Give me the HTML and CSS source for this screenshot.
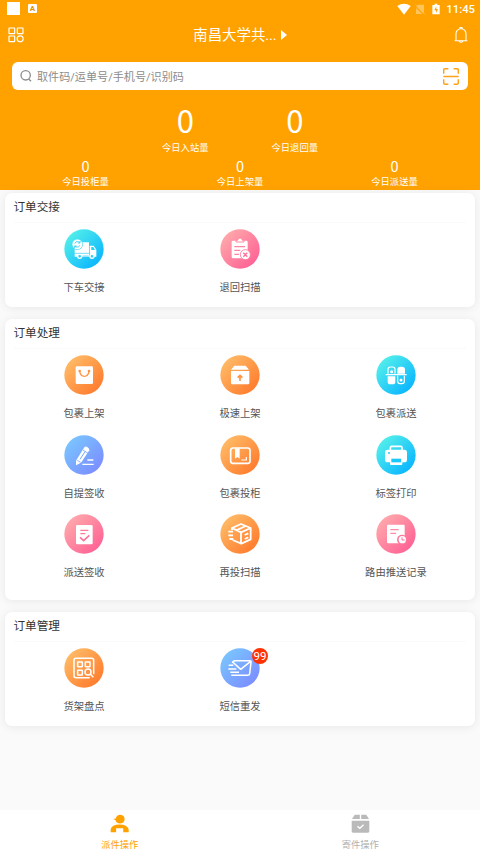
FILE: index.html
```html
<!DOCTYPE html>
<html lang="zh-CN">
<head>
<meta charset="utf-8">
<title>派件操作</title>
<link rel="stylesheet" href="styles.css">
</head>
<body>
<svg class="defs" width="0" height="0">
  <defs>
    <linearGradient id="cyan" x1="0" y1="0" x2="1" y2="1"><stop offset=".1" stop-color="#55f0ea"/><stop offset=".9" stop-color="#08b4ff"/></linearGradient>
    <linearGradient id="pink" x1="0" y1="0" x2="1" y2="1"><stop offset=".1" stop-color="#ffaaac"/><stop offset=".9" stop-color="#ff6094"/></linearGradient>
    <linearGradient id="orange" x1="0" y1="0" x2="1" y2="1"><stop offset=".1" stop-color="#ffbc68"/><stop offset=".9" stop-color="#ff7a2c"/></linearGradient>
    <linearGradient id="blue" x1="0" y1="0" x2="1" y2="1"><stop offset=".1" stop-color="#7ac6ff"/><stop offset=".9" stop-color="#7b8cff"/></linearGradient>
  </defs>
</svg>
<div class="app">
  <header class="header">
    <div class="status">
      <span class="square"></span>
      <span class="ime">A</span>
      <svg class="status-icons" viewBox="0 0 132 36"><path d="M1 9Q21-5 41 9L21 35Z" fill="#fff"/><path d="M63 5h18v27L58 11ZM57 15v18h19Z" fill="#ffc45c"/><path d="M56 4l28 30" stroke="#ffc45c" stroke-width="2"/><path d="M113 2h8v4h7v28h-22V6h7Z" fill="#fff"/><path d="M118 10l-6 12h5v8l6-12h-5Z" fill="#ffa200"/></svg>
      <span class="time">11:45</span>
    </div>
    <div class="titlebar">
      <svg class="apps" viewBox="0 0 48 48" fill="none" stroke="#fff" stroke-width="3.500"><rect x="3" y="3" width="17" height="17" rx="1"/><rect x="28" y="3" width="17" height="17" rx="1"/><rect x="3" y="27" width="17" height="17" rx="1"/><circle cx="36.500" cy="35.500" r="9"/></svg>
      <h1 class="station">南昌大学共...<span class="caret"></span></h1>
      <svg class="bell" viewBox="0 0 42 48" fill="none" stroke="#fff" stroke-width="3.200"><path d="M2 41h38M6 41V20a15 15 0 0 1 30 0v21M17 5q0-4 4-4t4 4M15 42q6 8 12 0"/></svg>
    </div>
    <div class="search">
      <svg class="glass" viewBox="0 0 36 36" fill="none" stroke="#8c8c8c" stroke-width="4"><circle cx="17" cy="16" r="14"/><path d="M26 27l7 7"/></svg>
      <span class="hint">取件码/运单号/手机号/识别码</span>
      <svg class="scan" viewBox="0 0 48 50" fill="none" stroke="#ffa21a" stroke-width="4.500"><path d="M2 17V6q0-4 4-4h10M32 2h10q4 0 4 4v11M2 33v11q0 4 4 4h10M32 48h10q4 0 4-4V33M1 25h46"/></svg>
    </div>
    <div class="totals">
      <div class="total"><b>0</b><span>今日入站量</span></div>
      <div class="total"><b>0</b><span>今日退回量</span></div>
    </div>
    <div class="counts">
      <div class="count"><b>0</b><span>今日投柜量</span></div>
      <div class="count"><b>0</b><span>今日上架量</span></div>
      <div class="count"><b>0</b><span>今日派送量</span></div>
    </div>
  </header>

  <main class="content">
    <section class="card">
      <h2>订单交接</h2>
      <div class="grid">
        <div class="item">
          <svg class="icon" viewBox="0 0 120 120"><circle cx="60" cy="60" r="59" fill="url(#cyan)"/><path d="M32 40h43v43H32ZM77 50h12l8 12v21H77Z" fill="#fff"/><path d="M82 54h6l5 9h-11Z" fill="#25d0f5"/><circle cx="40" cy="46" r="16" fill="#fff" stroke="#3cdcef" stroke-width="2"/><path d="M32 44q3-8 11-6l5 3M48 49q-4 7-11 5l-5-3M48 36v6h-6M32 57v-6h6" fill="none" stroke="#25d0f5" stroke-width="2.500"/><g fill="#2ed0f3" stroke="#fff" stroke-width="4"><circle cx="47" cy="82" r="6"/><circle cx="84" cy="82" r="6"/></g><path d="M31 73h44M56 81h18" stroke="#2dcff4" stroke-width="2"/></svg>
          <span>下车交接</span>
        </div>
        <div class="item">
          <svg class="icon" viewBox="0 0 120 120"><circle cx="60" cy="60" r="59" fill="url(#pink)"/><rect x="35" y="35" width="48" height="53" rx="4" fill="#fff"/><path d="M48 39v-5h5q1-7 7-7t7 7h5v5Z" fill="#fff" stroke="#ff8ca2" stroke-width="3"/><path d="M43 53h32M43 64h18M43 76h14" stroke="#ff86a0" stroke-width="4"/><circle cx="76" cy="77" r="15" fill="#fff" stroke="#ff75a0" stroke-width="2.500"/><path d="M70 71l12 12m0-12L70 83" stroke="#ff6f9a" stroke-width="4"/></svg>
          <span>退回扫描</span>
        </div>
      </div>
    </section>

    <section class="card tall">
      <h2>订单处理</h2>
      <div class="grid">
        <div class="item">
          <svg class="icon" viewBox="0 0 120 120"><circle cx="60" cy="60" r="59" fill="url(#orange)"/><rect x="35" y="34" width="52" height="53" rx="4" fill="#fff"/><path d="M47 50q3 14 14 14t14-14" fill="none" stroke="#ff9544" stroke-width="4"/><g fill="#ff9544"><circle cx="47" cy="48" r="4"/><circle cx="75" cy="48" r="4"/></g></svg>
          <span>包裹上架</span>
        </div>
        <div class="item">
          <svg class="icon" viewBox="0 0 120 120"><circle cx="60" cy="60" r="59" fill="url(#orange)"/><path d="M43 32h34l10 12H33ZM33 48h55v36q0 4-4 4H37q-4 0-4-4Z" fill="#fff"/><path d="M60 78V62m-7 6l7-7 7 7" fill="none" stroke="#ff9544" stroke-width="5"/></svg>
          <span>极速上架</span>
        </div>
        <div class="item">
          <svg class="icon" viewBox="0 0 120 120"><circle cx="60" cy="60" r="59" fill="url(#cyan)"/><g fill="none" stroke="#fff" stroke-width="3.500"><path d="M36 56V43q0-7 7-7h7q7 0 7 7v13M65 62v17q0 7 7 7h5q8 0 8-7V62M29 59h63"/></g><path d="M64 56V44q0-9 9-9h5q9 0 9 9v12ZM35 64h23v16q0 8-8 8h-7q-8 0-8-8Z" fill="#fff"/><circle cx="47" cy="50" r="4.500" fill="#fff"/><circle cx="75" cy="75" r="4.500" fill="#fff"/></svg>
          <span>包裹派送</span>
        </div>
        <div class="item">
          <svg class="icon" viewBox="0 0 120 120"><circle cx="60" cy="60" r="59" fill="url(#blue)"/><path d="M36 77L60 38q4-6 10-2t6 10L51 83l-15 8Z" fill="#fff"/><path d="M57 45l15 10M40 76l10 6" stroke="#78a6ff" stroke-width="2.500"/><path d="M48 73l15-23" stroke="#78a6ff" stroke-width="3"/><path d="M70 75h18M55 88h34" stroke="#fff" stroke-width="4"/></svg>
          <span>自提签收</span>
        </div>
        <div class="item">
          <svg class="icon" viewBox="0 0 120 120"><circle cx="60" cy="60" r="59" fill="url(#orange)"/><rect x="32" y="39" width="58" height="46" rx="7" fill="none" stroke="#fff" stroke-width="5"/><path d="M45 40h14v31l-7-5-7 5Z" fill="#fff"/><path d="M79 66v9H64" fill="none" stroke="#fff" stroke-width="3.500"/></svg>
          <span>包裹投柜</span>
        </div>
        <div class="item">
          <svg class="icon" viewBox="0 0 120 120"><circle cx="60" cy="60" r="59" fill="url(#cyan)"/><path d="M43 46v-8q0-4 4-4h27q4 0 4 4v8" fill="none" stroke="#fff" stroke-width="5"/><rect x="27" y="44" width="66" height="38" rx="8" fill="#fff"/><rect x="42" y="70" width="37" height="20" rx="3" fill="#fff"/><path d="M46 71h29v11H46Z" fill="#19c9f7"/><path d="M36 54h6" stroke="#28cdf4" stroke-width="5"/></svg>
          <span>标签打印</span>
        </div>
        <div class="item">
          <svg class="icon" viewBox="0 0 120 120"><circle cx="60" cy="60" r="59" fill="url(#pink)"/><rect x="36" y="33" width="50" height="58" rx="4" fill="#fff"/><path d="M49 49h24M49 59h15" stroke="#ff7c9c" stroke-width="3.500"/><path d="M48 70l11 10 17-16" fill="none" stroke="#ff7199" stroke-width="4.500"/></svg>
          <span>派送签收</span>
        </div>
        <div class="item">
          <svg class="icon" viewBox="0 0 120 120"><circle cx="60" cy="60" r="59" fill="url(#orange)"/><g fill="none" stroke="#fff" stroke-width="5.500" stroke-linejoin="round"><path d="M36 48v-6l27-12 29 12v34L64 89 38 78M36 42l27 13 29-13M63 55v33M49 49l28-13M25 53h14M25 64h14M28 75h12M74 63l11-5M74 75l11-5"/></g></svg>
          <span>再投扫描</span>
        </div>
        <div class="item">
          <svg class="icon" viewBox="0 0 120 120"><circle cx="60" cy="60" r="59" fill="url(#pink)"/><path d="M36 32h47q3 0 3 3v53H36q-3 0-3-3V35q0-3 3-3Z" fill="#fff"/><path d="M43 47h25M43 58h17" stroke="#ff8da3" stroke-width="3.500"/><circle cx="78" cy="77" r="15" fill="#ff779b"/><circle cx="79" cy="77" r="11" fill="#fff"/><path d="M78 70v8h8" fill="none" stroke="#ff6d98" stroke-width="3"/></svg>
          <span>路由推送记录</span>
        </div>
      </div>
    </section>

    <section class="card">
      <h2>订单管理</h2>
      <div class="grid">
        <div class="item">
          <svg class="icon" viewBox="0 0 120 120"><circle cx="60" cy="60" r="59" fill="url(#orange)"/><g fill="none" stroke="#fff" stroke-width="4.500"><path d="M77 89H36q-6 0-6-6V37q0-6 6-6h47q6 0 6 6v42"/><rect x="41" y="42" width="14" height="14" rx="1"/><rect x="64" y="42" width="14" height="14" rx="1"/><rect x="41" y="67" width="14" height="14" rx="1"/><circle cx="72" cy="72" r="9"/><path d="M79 79l9 9"/></g></svg>
          <span>货架盘点</span>
        </div>
        <div class="item">
          <svg class="icon" viewBox="0 0 120 120"><circle cx="60" cy="60" r="59" fill="url(#blue)"/><g fill="none" stroke="#fff" stroke-width="4.500" stroke-linejoin="round"><path d="M37 45q2-7 8-7h44q5 0 4 5l-4 34q-1 5-6 5H34M38 42l24 22 30-24M26 52h14M25 63h24M31 73h26"/></g></svg>
          <em class="badge">99</em>
          <span>短信重发</span>
        </div>
      </div>
    </section>
  </main>

  <nav class="tabs">
    <div class="tab active">
      <svg viewBox="0 0 56 56" fill="#ffa200"><path d="M9 15l8-2Q20 2 30 2q13 1 13 13T30 28Q18 28 16 18ZM2 54V45q3-14 26-14t27 14v9H39V42H18v12Z"/></svg>
      <span>派件操作</span>
    </div>
    <div class="tab">
      <svg viewBox="0 0 56 56" fill="#bababa"><path d="M11 2h15v13H3ZM30 2h15l8 13H30ZM2 20h52v31q0 4-4 4H6q-4 0-4-4Z"/><path d="M19 36l7 6 11-10" fill="none" stroke="#fff" stroke-width="4"/></svg>
      <span>寄件操作</span>
    </div>
  </nav>
</div>
</body>
</html>
```
FILE: styles.css
```css
* { box-sizing: border-box; }
body {
  margin: 0;
  background: #fafafa;
  font-family: Roboto, "Noto Sans CJK SC", sans-serif;
  color: #333;
}
.defs { position: absolute; }
.app {
  display: flex;
  flex-direction: column;
  width: 480px;
  height: 854px;
  overflow: hidden;
}
.header {
  height: 190px;
  flex: none;
  background: #ffa200;
  color: #fff;
}
.status {
  display: flex;
  align-items: center;
  height: 17px;
  padding: 0 5px 0 7px;
}
.square { width: 13px; height: 13px; background: #fff; }
.ime {
  width: 9px;
  height: 9px;
  margin-left: 8px;
  border-radius: 1px;
  background: #fff;
  color: #e49100;
  font-size: 8px;
  font-weight: 700;
  line-height: 10px;
  text-align: center;
}
.status-icons { width: 44px; height: 12px; margin-left: auto; }
.time { margin-left: 5px; padding-top: 1px; font-size: 11.3px; font-weight: 500; }
.titlebar {
  display: flex;
  align-items: center;
  justify-content: space-between;
  height: 36px;
  padding: 0 12px 0 8px;
}
.apps { width: 16px; height: 16px; }
.bell { width: 14px; height: 16px; }
.station {
  display: flex;
  align-items: center;
  margin: 0;
  padding: 1px 0 0 2px;
  font-size: 14.4px;
  font-weight: 400;
  line-height: 20px;
}
.caret {
  margin: -1px 0 0 4px;
  border-left: 6px solid #fff;
  border-top: 5px solid transparent;
  border-bottom: 5px solid transparent;
}
.search {
  display: flex;
  align-items: center;
  height: 28px;
  margin: 9px 12px 0;
  padding: 0 9px 0 8px;
  border-radius: 6px;
  background: #fff;
}
.glass { width: 12px; height: 12px; }
.hint { margin: -1px 0 0 5px; color: #8c8c8c; font-size: 11.1px; }
.scan { width: 16px; height: 17px; margin-left: auto; }
.totals {
  display: flex;
  justify-content: center;
  gap: 63px;
  height: 67px;
  padding-top: 11px;
}
.total, .count {
  display: flex;
  flex-direction: column;
  align-items: center;
  font-size: 9.3px;
  line-height: 12px;
}
.total b, .count b {
  font-family: "Noto Sans CJK SC", sans-serif;
  font-weight: 400;
}
.total b { font-size: 31px; line-height: 37px; margin-bottom: 4px; }
.counts { display: flex; justify-content: center; }
.count { width: 154.500px; }
.count b { font-size: 14.500px; line-height: 17px; margin-bottom: 2px; }
.content {
  display: flex;
  flex: 1;
  flex-direction: column;
  gap: 12px;
  padding: 3px 5px 0;
}
.card {
  height: 114px;
  border-radius: 7px;
  background: #fff;
  box-shadow: 0 1px 10px rgba(0, 0, 0, 0.08);
}
.card.tall { height: 281px; }
.card h2 {
  height: 30px;
  margin: 0 9px;
  border-bottom: 1px solid #fafafa;
  font-size: 11.6px;
  font-weight: 400;
  line-height: 29px;
  text-indent: -0.5px;
}
.grid {
  display: grid;
  grid-template-columns: repeat(3, 156px);
  grid-auto-rows: 79.700px;
  justify-content: center;
  padding-top: 6px;
}
.item {
  position: relative;
  display: flex;
  flex-direction: column;
  align-items: center;
  color: #555;
  font-size: 10.3px;
  line-height: 14px;
}
.icon { width: 40px; height: 40px; margin-bottom: 12px; }
.badge {
  position: absolute;
  top: 0;
  left: 90px;
  width: 16px;
  height: 16px;
  border-radius: 50%;
  background: #ff3204;
  color: #fff;
  font-size: 11.5px;
  font-style: normal;
  line-height: 17px;
  text-align: center;
}
.tabs {
  display: flex;
  flex: none;
  height: 44px;
  background: #fff;
}
.tab {
  display: flex;
  flex: 1;
  flex-direction: column;
  align-items: center;
  padding-top: 4px;
  color: #b0b0b0;
  font-size: 9.3px;
  line-height: 12px;
}
.tab svg { width: 19px; height: 19px; margin-bottom: 6px; }
.tab.active { padding-right: 1px; color: #ffa200; }
```
